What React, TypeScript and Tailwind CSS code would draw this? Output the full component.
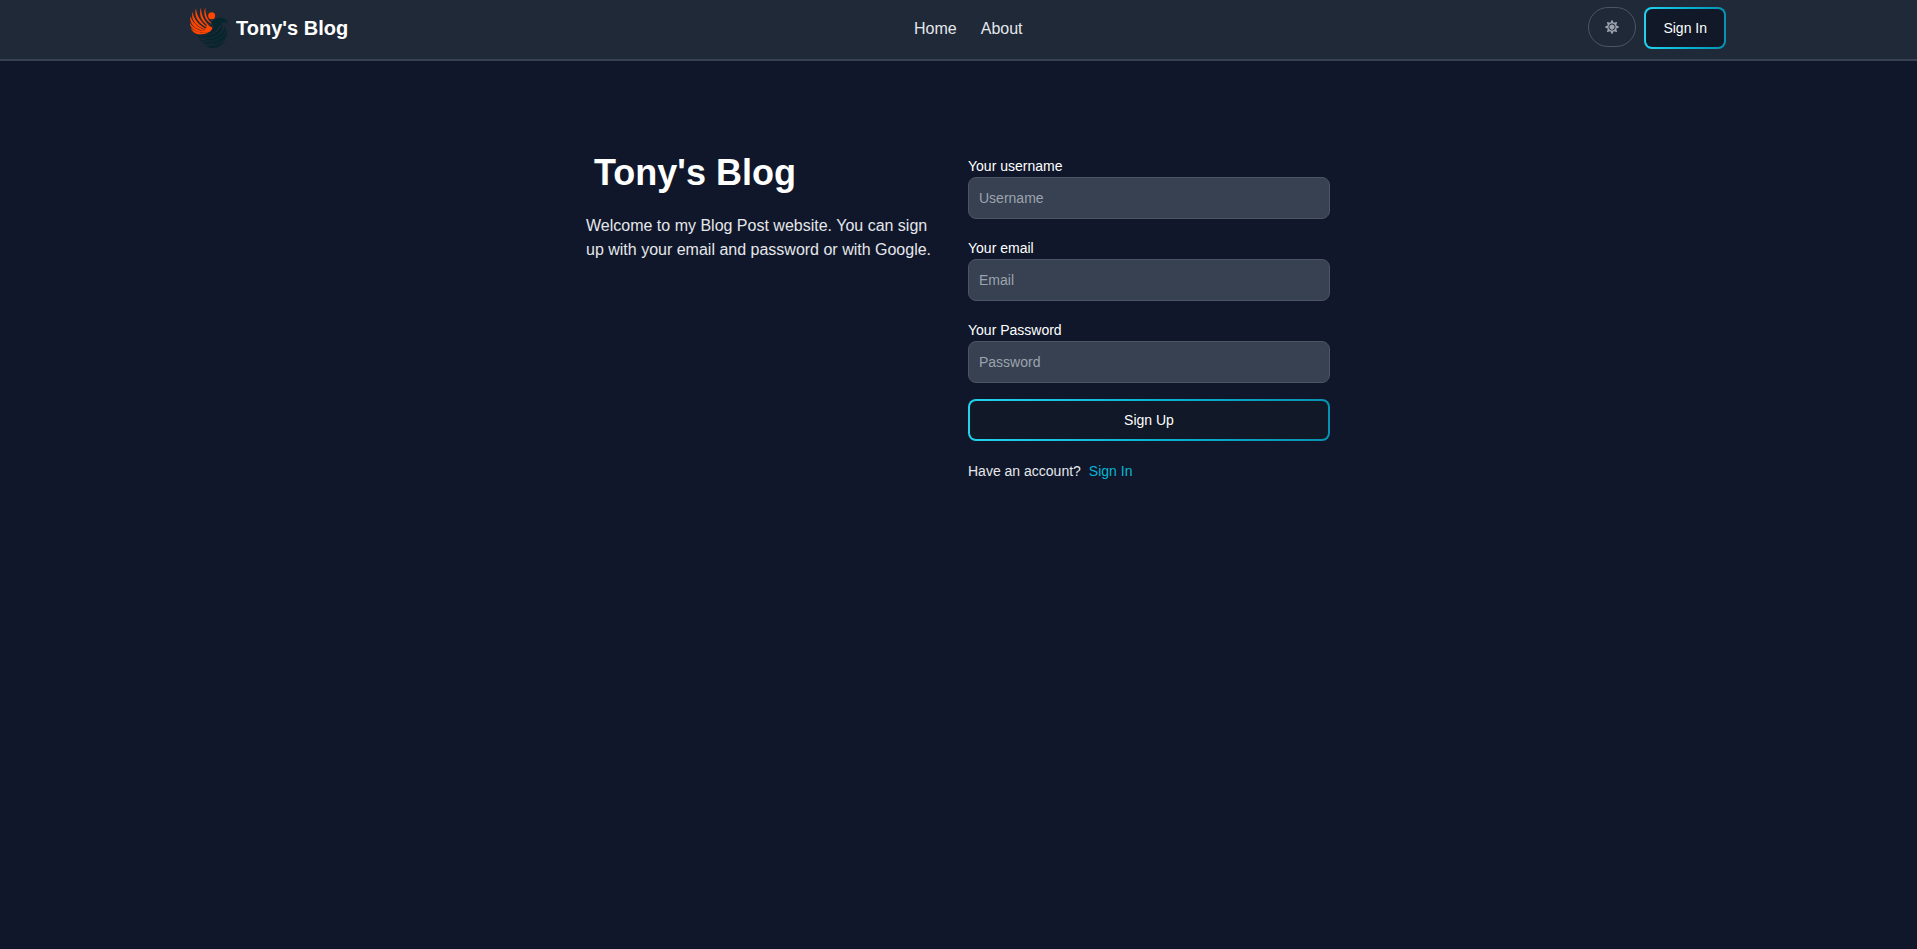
import type { ReactNode } from "react";
import { FaSun } from "react-icons/fa";

function Logo() {
  return (
    <svg viewBox="20 21 114 126" className="mr-2 h-[42px] w-[38px]" aria-hidden="true">
      <g fill="#ff4500">
        <circle cx="85" cy="47" r="10.5" />
        <path d="M66 22C65 42 72 60 88 73C70 66 56 46 66 22Z" />
        <path d="M53 22C53 46 64 66 82 80C60 72 43 50 53 22Z" />
        <path d="M38 25C40 50 55 71 78 85C50 77 29 52 38 25Z" />
        <path d="M28 35C31 59 49 79 76 90C44 85 20 62 28 35Z" />
        <path d="M22 49C27 70 47 86 76 94C41 93 15 74 22 49Z" />
        <path d="M19 66C27 83 48 93 76 97C45 102 19 90 19 66Z" />
        <path d="M22 84C34 95 54 99 76 99C53 109 29 103 22 84Z" />
        <path d="M68 68C73 76 79 79 87 82C86 91 80 97 72 98C64 98 56 95 51 92C65 92 74 83 68 68Z" />
      </g>
      <g fill="#06262e">
        <path d="M84 69C91 58 102 52 114 54C125 54 132 60 133 72C127 66 121 66 116 69C112 78 104 82 99 91C91 102 68 110 40 105C63 103 80 100 88 90C93 83 89 76 84 69Z" />
        <path d="M117 71C122 91 107 107 86 112C68 115 50 112 38 105C61 110 84 107 98 97C108 89 113 82 117 71Z" />
        <path d="M123 75C133 96 119 113 96 119C75 123 53 118 42 109C64 117 87 116 103 107C118 98 125 88 123 75Z" />
        <path d="M130 84C136 107 120 123 98 128C76 132 56 126 47 117C69 125 93 124 110 114C124 105 130 96 130 84Z" />
        <path d="M132 103C127 122 113 133 95 136C78 139 62 133 55 127C77 134 98 131 113 122C123 116 129 111 132 103Z" />
        <path d="M126 123C117 138 99 147 80 143C74 142 69 139 65 136C88 141 109 137 126 123Z" />
      </g>
      <g fill="none" stroke="#1f2937" strokeWidth="2" strokeLinecap="round">
        <path d="M43 106C70 109 96 102 110 80" />
        <path d="M46 114C76 120 106 113 118 90" />
        <path d="M55 124C84 130 112 121 125 101" />
        <path d="M64 134C88 138 110 131 125 116" />
      </g>
    </svg>
  );
}

function OutlineButton({ type, children }: { type: "button" | "submit"; children: ReactNode }) {
  return (
    <button
      type={type}
      className="rounded-lg bg-linear-to-r from-[#22d3ee] via-[#06b6d4] to-[#0891b2] p-0.5 text-sm text-white"
    >
      <span className="flex items-center justify-center rounded-md border border-transparent bg-[#111827] px-4 py-2">
        {children}
      </span>
    </button>
  );
}

function Field({ id, label, type, placeholder }: { id: string; label: string; type: string; placeholder: string }) {
  return (
    <div>
      <label htmlFor={id} className="block pt-[3px] pb-px text-sm text-white">
        {label}
      </label>
      <input
        id={id}
        type={type}
        placeholder={placeholder}
        className="block w-full rounded-lg border border-[#4b5563] bg-[#374151] p-2.5 text-sm text-white placeholder:text-[#9ca3af]"
      />
    </div>
  );
}

export default function App() {
  return (
    <div className="min-h-screen bg-[#10172a] font-[Arial,'Liberation_Sans',sans-serif] text-[#e5e7eb]">
      <header className="border-b-2 border-[#374151] bg-[#1f2937] pt-[7px] pr-px pb-2.5">
        <div className="mx-auto flex max-w-screen-2xl items-center justify-between">
          <a href="#" className="flex items-center text-xl font-bold whitespace-nowrap text-white">
            <Logo />
            Tony's Blog
          </a>
          <nav className="flex gap-6 pt-0.5">
            <a href="#">Home</a>
            <a href="#">About</a>
          </nav>
          <div className="flex items-start gap-2">
            <button
              type="button"
              aria-label="Toggle theme"
              className="flex h-10 w-12 items-center justify-center rounded-full border border-[#4b5563] text-sm text-[#9ca3af]"
            >
              <FaSun />
            </button>
            <OutlineButton type="button">Sign In</OutlineButton>
          </div>
        </div>
      </header>
      <main className="pt-20 pr-px">
        <div className="mx-auto grid max-w-3xl grid-cols-2 gap-5 p-3">
          <section>
            <h1 className="px-2 text-4xl font-bold text-white">Tony's Blog</h1>
            <p className="mt-[21px]">
              Welcome to my Blog Post website. You can sign up with your email and password or with Google.
            </p>
          </section>
          <section>
            <form className="flex flex-col gap-4">
              <Field id="username" label="Your username" type="text" placeholder="Username" />
              <Field id="email" label="Your email" type="email" placeholder="Email" />
              <Field id="password" label="Your Password" type="password" placeholder="Password" />
              <OutlineButton type="submit">Sign Up</OutlineButton>
            </form>
            <p className="mt-5 flex gap-2 text-sm">
              <span>Have an account?</span>
              <a href="#" className="text-[#06b6d4]">
                Sign In
              </a>
            </p>
          </section>
        </div>
      </main>
    </div>
  );
}
